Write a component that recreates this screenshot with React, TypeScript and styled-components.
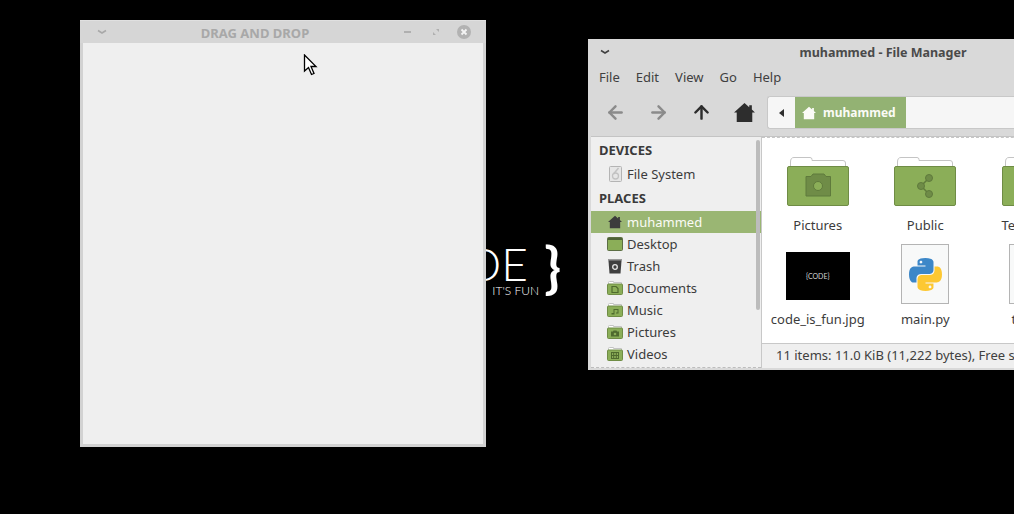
import React from "react";
import styled, { createGlobalStyle } from "styled-components";
import { ArrowLeft, ArrowRight, ArrowUp } from "lucide-react";

const GlobalStyle = createGlobalStyle`
  html, body {
    margin: 0;
    background: #000;
  }
  body {
    font-family: "Noto Sans", "Open Sans", sans-serif;
    font-size: 13px;
    color: #3c3c3c;
  }
`;

// Desktop
const Desktop = styled.div`
  position: relative;
  width: 1014px;
  height: 514px;
  overflow: hidden;
  background: #000;
`;

const Wallpaper = styled.div`
  position: absolute;
  left: 380px;
  top: 232px;
  width: 190px;
  height: 70px;
  color: #fff;
  font-family: Lato, sans-serif;
`;

const WallpaperWord = styled.span`
  position: absolute;
  right: 42px;
  top: 12px;
  font-size: 46px;
  font-weight: 300;
  line-height: 40px;
`;

const WallpaperBrace = styled.span`
  position: absolute;
  right: 9px;
  top: 2px;
  font-size: 55px;
  font-weight: 700;
  line-height: 64px;
`;

const WallpaperTag = styled.span`
  position: absolute;
  right: 31px;
  top: 53px;
  font-size: 12px;
  font-weight: 300;
  line-height: 12px;
  white-space: nowrap;
`;

const Cursor = styled.svg`
  position: absolute;
  left: 303px;
  top: 54px;
`;

// Empty app window
const AppWindow = styled.div`
  position: absolute;
  left: 80px;
  top: 20px;
  width: 406px;
  height: 427px;
  box-sizing: border-box;
  display: flex;
  flex-direction: column;
  border: 3px solid #d2d2d2;
  border-top: 0;
  background: #efefef;
`;

const AppTitleBar = styled.div`
  height: 23px;
  margin: 0 -3px;
  padding: 0 8px 0 12px;
  display: flex;
  align-items: center;
  flex-shrink: 0;
  background: #d6d6d6;
  border-top: 1px solid #e0e0e0;
  box-sizing: border-box;
`;

const TitleSlot = styled.div`
  width: ${(p: { $w: number }) => p.$w}px;
  height: 20px;
  display: flex;
  align-items: center;
  justify-content: center;
  flex-shrink: 0;
`;

const AppTitle = styled.div`
  flex: 1;
  padding-left: 4px;
  padding-top: 1px;
  text-align: center;
  font-size: 13px;
  font-weight: 700;
  line-height: 20px;
  color: #a8a8a8;
`;

// File manager window
const FileWindow = styled.div`
  position: absolute;
  left: 588px;
  top: 39px;
  width: 590px;
  height: 331px;
  box-sizing: border-box;
  display: flex;
  flex-direction: column;
  background: #d9d9d9;
  border-left: 3px solid #d9d9d9;
  border-bottom: 2px solid #d9d9d9;
`;

const FileTitleBar = styled.div`
  height: 26px;
  flex-shrink: 0;
  display: flex;
  align-items: center;
  margin-left: -3px;
  padding-left: 12px;
`;

const FileTitle = styled.div`
  flex: 1;
  padding-right: 22px;
  text-align: center;
  font-weight: 700;
  font-size: 12.5px;
  color: #4a4a4a;
`;

const MenuBar = styled.div`
  height: 25px;
  padding-bottom: 2px;
  box-sizing: border-box;
  flex-shrink: 0;
  display: flex;
  align-items: center;
  gap: 16px;
  padding-left: 8px;
`;

const MenuItem = styled.span`
  font-size: 13px;
  color: #404040;
`;

const Toolbar = styled.div`
  height: 47px;
  flex-shrink: 0;
  box-sizing: border-box;
  display: flex;
  align-items: center;
  padding-left: 3px;
  padding-bottom: 1px;
  border-bottom: 1px solid #c4c4c4;
`;

const ToolButton = styled.div`
  width: 43px;
  height: 32px;
  display: flex;
  align-items: center;
  justify-content: center;
  color: ${(p: { $dim?: boolean }) => (p.$dim ? "#8b8b8b" : "#2d2d2d")};
`;

const PathBar = styled.div`
  flex: 1;
  height: 33px;
  margin-left: 1px;
  box-sizing: border-box;
  display: flex;
  align-items: stretch;
  background: #f6f6f6;
  border: 1px solid #c8c8c8;
  border-right: 0;
  border-radius: 3px 0 0 3px;
`;

const PathBack = styled.div`
  width: 27px;
  display: flex;
  align-items: center;
  justify-content: center;
`;

const PathCrumb = styled.div`
  width: 111px;
  display: flex;
  align-items: center;
  gap: 7px;
  padding-left: 7px;
  box-sizing: border-box;
  background: #93b273;
  color: #fbfbf6;
  font-weight: 700;
  font-size: 12px;
`;

const Body = styled.div`
  flex: 1;
  min-height: 0;
  display: flex;
`;

const Sidebar = styled.div`
  position: relative;
  width: 170px;
  flex-shrink: 0;
  overflow: hidden;
  box-sizing: border-box;
  padding-top: 1px;
  background: #efefef;
  border-bottom: 1px dashed #bdbdbd;
`;

const SidebarScroll = styled.div`
  position: absolute;
  right: 1px;
  top: 3px;
  width: 4px;
  height: 170px;
  border-radius: 2px;
  background: #bcbcbc;
`;

const SidebarHeading = styled.div`
  height: 24px;
  line-height: 24px;
  padding-left: 8px;
  font-weight: 700;
  font-size: 13px;
  color: #3a3a3a;
`;

const SidebarRow = styled.div<{ $active?: boolean; $tall?: boolean }>`
  height: ${(p) => (p.$tall ? 24 : 22)}px;
  display: flex;
  align-items: center;
  gap: 4px;
  padding-left: 16px;
  background: ${(p) => (p.$active ? "#9ab673" : "transparent")};
  color: ${(p) => (p.$active ? "#fbfbf6" : "#3c3c3c")};
`;

const SidebarIcon = styled.div`
  width: 16px;
  height: 16px;
  display: flex;
  align-items: center;
  justify-content: center;
  flex-shrink: 0;
`;

const SidebarGap = styled.div`
  height: 1px;
`;

const MainColumn = styled.div`
  flex: 1;
  min-width: 0;
  display: flex;
  flex-direction: column;
  background: #fff;
  border-left: 1px solid #c8c8c8;
`;

const FileGrid = styled.div`
  flex: 1;
  min-height: 0;
  overflow: hidden;
  box-sizing: border-box;
  padding: 8px 0 0 2px;
  display: grid;
  grid-template-columns: repeat(4, 107.5px);
  grid-auto-rows: 88px;
  row-gap: 6px;
  border-top: 1px dashed #c6c6c6;
`;

const FileItem = styled.div`
  display: flex;
  flex-direction: column;
  align-items: center;
`;

const FileIconBox = styled.div`
  height: 70px;
  display: flex;
  align-items: center;
  justify-content: center;
`;

const FileLabel = styled.div`
  height: 18px;
  line-height: 18px;
  white-space: nowrap;
  color: #3c3c3c;
`;

const Thumb = styled.div`
  width: 64px;
  height: 48px;
  margin-top: 2px;
  display: flex;
  align-items: center;
  justify-content: center;
  background: #000;
  color: #d4d4d4;
  font-size: 7px;
  font-family: Lato, sans-serif;
`;

const PageThumb = styled.div`
  width: 48px;
  height: 60px;
  margin-top: -2px;
  box-sizing: border-box;
  display: flex;
  align-items: center;
  justify-content: center;
  background: #f8f9f9;
  border: 1px solid #b4b4b4;
`;

const StatusBar = styled.div`
  height: 25px;
  flex-shrink: 0;
  box-sizing: border-box;
  display: flex;
  align-items: center;
  padding: 0 0 2px 14px;
  white-space: nowrap;
  background: #efefef;
  border-top: 1px solid #c8c8c8;
  color: #404040;
`;

// Icons
const Chevron = ({ color }: { color: string }) => (
  <svg width="10" height="6" viewBox="0 0 10 6">
    <path d="M1 1.5 5 4 9 1.5" fill="none" stroke={color} strokeWidth="1.5" />
  </svg>
);

const HomeIcon = ({ size, color }: { size: number; color: string }) => (
  <svg width={size} height={size} viewBox="0 0 20 20">
    <path d="M10 1 14.5 5V3H17V7.2L20 10H17.4V19H2.6V10H0Z" fill={color} />
  </svg>
);

const Folder = ({ emblem }: { emblem?: React.ReactNode }) => (
  <svg width="62" height="49" viewBox="0 0 62 49">
    <path
      d="M3.5 10V5Q3.5 .5 7 .5H23Q25 .5 25 2.5V3.5H56Q58.5 3.5 58.5 6V10"
      fill="#fff"
      stroke="#c4c4c4"
    />
    <rect x=".5" y="9.5" width="61" height="39" rx="1.5" fill="#8bae58" stroke="#6f8c45" />
    {emblem}
  </svg>
);

const SmallFolder = ({ emblem }: { emblem?: React.ReactNode }) => (
  <svg width="16" height="14" viewBox="0 0 16 14">
    <path d="M1.5 3V1.5Q1.5 .5 2.5 .5H6.5V1.5H14.5V3" fill="#fff" stroke="#c4c4c4" />
    <rect x=".5" y="3" width="15" height="10.5" rx="1" fill="#8bae58" stroke="#6f8c45" />
    {emblem}
  </svg>
);

const DARK = "#4f6a2e";

const LargeCamera = (
  <g>
    <path d="M19 19.500H24L26 17H37L39 19.500H43.500V39H19Z" fill="#6f8c47" stroke="#5f7a3c" />
    <circle cx="31" cy="29" r="4.500" fill="#8bae58" stroke="#5f7a3c" />
  </g>
);

const LargeShare = (
  <g fill="#6f8c47" stroke="#5f7a3c">
    <path d="M27 29 35 21M27 29 35 37" fill="none" strokeWidth="1.500" />
    <circle cx="27" cy="29" r="3.500" />
    <circle cx="35" cy="21" r="3.500" />
    <circle cx="35" cy="37" r="3.500" />
  </g>
);

const SmallDoc = <path d="M5 5.500H9L11 7.500V11.500H5Z" fill="none" stroke={DARK} strokeWidth="1.200" />;
const SmallMusic = <path d="M5.500 11.500H4.500V10H6.500V6H11.500V10.500H9V9.500H10.500V7H7.500V11.500Z" fill={DARK} />;
const SmallCamera = (
  <g fill={DARK}>
    <path d="M4 6.500H6L6.500 5.500H9.500L10 6.500H12V11.500H4Z" />
    <circle cx="8" cy="9" r="1.300" fill="#8bae58" />
  </g>
);
const SmallFilm = (
  <g>
    <rect x="4.500" y="5.500" width="7" height="6" fill="none" stroke={DARK} />
    <path d="M6.700 5.500V11.500M9.300 5.500V11.500M4.500 8.500H11.500" stroke={DARK} />
  </g>
);

const DesktopIcon = () => (
  <svg width="16" height="14" viewBox="0 0 16 14">
    <rect x=".5" y=".5" width="15" height="13" rx="1" fill="#8bae58" stroke="#5c6e44" />
    <rect x="1" y="1" width="14" height="2" fill="#4f6238" />
  </svg>
);

const DiskIcon = () => (
  <svg width="13" height="16" viewBox="0 0 13 16">
    <rect x=".5" y=".5" width="12" height="15" rx="1" fill="#e6e6e6" stroke="#b4b4b4" />
    <path d="M9.500 2 4.500 8" stroke="#c2c2c2" strokeWidth="1.500" />
    <circle cx="6.500" cy="10" r="3" fill="none" stroke="#c2c2c2" strokeWidth="1.300" />
  </svg>
);

const TrashIcon = () => (
  <svg width="14" height="16" viewBox="0 0 14 16">
    <path d="M.5 1H13.500V3L12.500 15.500H1.500L.5 3Z" fill="#3f3f3f" />
    <rect x="1" y="1" width="12" height="1.500" fill="#9a9a9a" />
    <circle cx="7" cy="9" r="2.300" fill="none" stroke="#e8e8e8" strokeWidth="1.300" />
  </svg>
);

const PythonLogo = () => (
  <svg width="33" height="33" viewBox="0 0 110.600 110">
    <path
      d="M54.900 0c-28 0-26.300 12.200-26.300 12.200v12.600h26.700v3.800H18s-18-2-18 26.300 15.700 27.300 15.700 27.300h9.400V68.900s-.5-15.700 15.400-15.700h26.600s15 .2 15-14.500V14.300S84.400 0 54.900 0zM40.100 8.500c2.700 0 4.800 2.200 4.800 4.800s-2.200 4.800-4.800 4.800-4.800-2.200-4.800-4.800 2.200-4.800 4.800-4.800z"
      fill="#3c87c8"
    />
    <path
      d="M55.700 110c28 0 26.300-12.200 26.300-12.200V85.200H55.300v-3.800h37.300s18 2 18-26.300-15.700-27.300-15.700-27.300h-9.400v13.100s.5 15.700-15.400 15.700H43.500s-15-.2-15 14.500v24.400S26.200 110 55.700 110zm14.800-8.500c-2.700 0-4.800-2.200-4.800-4.800s2.200-4.800 4.800-4.800 4.800 2.200 4.800 4.800-2.200 4.800-4.800 4.800z"
      fill="#fdc832"
    />
  </svg>
);

const places: { name: string; icon: React.ReactNode; active?: boolean }[] = [
  { name: "muhammed", icon: <HomeIcon size={14} color="#3c3c3c" />, active: true },
  { name: "Desktop", icon: <DesktopIcon /> },
  { name: "Trash", icon: <TrashIcon /> },
  { name: "Documents", icon: <SmallFolder emblem={SmallDoc} /> },
  { name: "Music", icon: <SmallFolder emblem={SmallMusic} /> },
  { name: "Pictures", icon: <SmallFolder emblem={SmallCamera} /> },
  { name: "Videos", icon: <SmallFolder emblem={SmallFilm} /> },
];

export default function App() {
  return (
    <Desktop>
      <GlobalStyle />
      <Wallpaper>
        <WallpaperWord>CODE</WallpaperWord>
        <WallpaperBrace>{"}"}</WallpaperBrace>
        <WallpaperTag>IT'S FUN</WallpaperTag>
      </Wallpaper>

      <AppWindow>
        <AppTitleBar>
          <TitleSlot $w={20}>
            <Chevron color="#a8a8a8" />
          </TitleSlot>
          <AppTitle>DRAG AND DROP</AppTitle>
          <TitleSlot $w={28}>
            <svg width="8" height="2" viewBox="0 0 8 2">
              <rect width="7" height="2" fill="#b0b0b0" />
            </svg>
          </TitleSlot>
          <TitleSlot $w={28}>
            <svg width="8" height="8" viewBox="0 0 8 8">
              <path d="M4 1H7V4ZM1 4 4 7H1Z" fill="#b0b0b0" />
            </svg>
          </TitleSlot>
          <TitleSlot $w={28}>
            <svg width="14" height="14" viewBox="0 0 14 14">
              <circle cx="7" cy="7" r="7" fill="#b2b2b2" />
              <path d="M4.500 4.500 9.500 9.500M9.500 4.500 4.500 9.500" stroke="#f4f4f4" strokeWidth="1.800" />
            </svg>
          </TitleSlot>
        </AppTitleBar>
      </AppWindow>

      <FileWindow>
        <FileTitleBar>
          <Chevron color="#404040" />
          <FileTitle>muhammed - File Manager</FileTitle>
        </FileTitleBar>
        <MenuBar>
          {["File", "Edit", "View", "Go", "Help"].map((m) => (
            <MenuItem key={m}>{m}</MenuItem>
          ))}
        </MenuBar>
        <Toolbar>
          <ToolButton $dim>
            <ArrowLeft size={21} strokeWidth={2.8} />
          </ToolButton>
          <ToolButton $dim>
            <ArrowRight size={21} strokeWidth={2.8} />
          </ToolButton>
          <ToolButton>
            <ArrowUp size={21} strokeWidth={2.8} />
          </ToolButton>
          <ToolButton>
            <HomeIcon size={21} color="#2d2d2d" />
          </ToolButton>
          <PathBar>
            <PathBack>
              <svg width="5" height="8" viewBox="0 0 5 8">
                <path d="M5 0V8L0 4Z" fill="#2d2d2d" />
              </svg>
            </PathBack>
            <PathCrumb>
              <HomeIcon size={14} color="#fbfbf6" />
              muhammed
            </PathCrumb>
          </PathBar>
        </Toolbar>
        <Body>
          <Sidebar>
            <SidebarHeading>DEVICES</SidebarHeading>
            <SidebarRow $tall>
              <SidebarIcon>
                <DiskIcon />
              </SidebarIcon>
              File System
            </SidebarRow>
            <SidebarHeading>PLACES</SidebarHeading>
            <SidebarGap />
            {places.map((p) => (
              <SidebarRow key={p.name} $active={p.active}>
                <SidebarIcon>{p.icon}</SidebarIcon>
                {p.name}
              </SidebarRow>
            ))}
            <SidebarScroll />
          </Sidebar>
          <MainColumn>
            <FileGrid>
              <FileItem>
                <FileIconBox>
                  <Folder emblem={LargeCamera} />
                </FileIconBox>
                <FileLabel>Pictures</FileLabel>
              </FileItem>
              <FileItem>
                <FileIconBox>
                  <Folder emblem={LargeShare} />
                </FileIconBox>
                <FileLabel>Public</FileLabel>
              </FileItem>
              <FileItem>
                <FileIconBox>
                  <Folder />
                </FileIconBox>
                <FileLabel>Templates</FileLabel>
              </FileItem>
              <span />
              <FileItem>
                <FileIconBox>
                  <Thumb>{"{CODE}"}</Thumb>
                </FileIconBox>
                <FileLabel>code_is_fun.jpg</FileLabel>
              </FileItem>
              <FileItem>
                <FileIconBox>
                  <PageThumb>
                    <PythonLogo />
                  </PageThumb>
                </FileIconBox>
                <FileLabel>main.py</FileLabel>
              </FileItem>
              <FileItem>
                <FileIconBox>
                  <PageThumb />
                </FileIconBox>
                <FileLabel>test.txt</FileLabel>
              </FileItem>
            </FileGrid>
            <StatusBar>11 items: 11.0 KiB (11,222 bytes), Free space: 52.3 GB</StatusBar>
          </MainColumn>
        </Body>
      </FileWindow>

      <Cursor width="15" height="22" viewBox="0 0 15 22">
        <path d="M1.500 1V17L5.500 13.500 8.500 20.500 11 19.500 8 12.500H13Z" fill="#fff" stroke="#000" strokeWidth="1.300" />
      </Cursor>
    </Desktop>
  );
}
